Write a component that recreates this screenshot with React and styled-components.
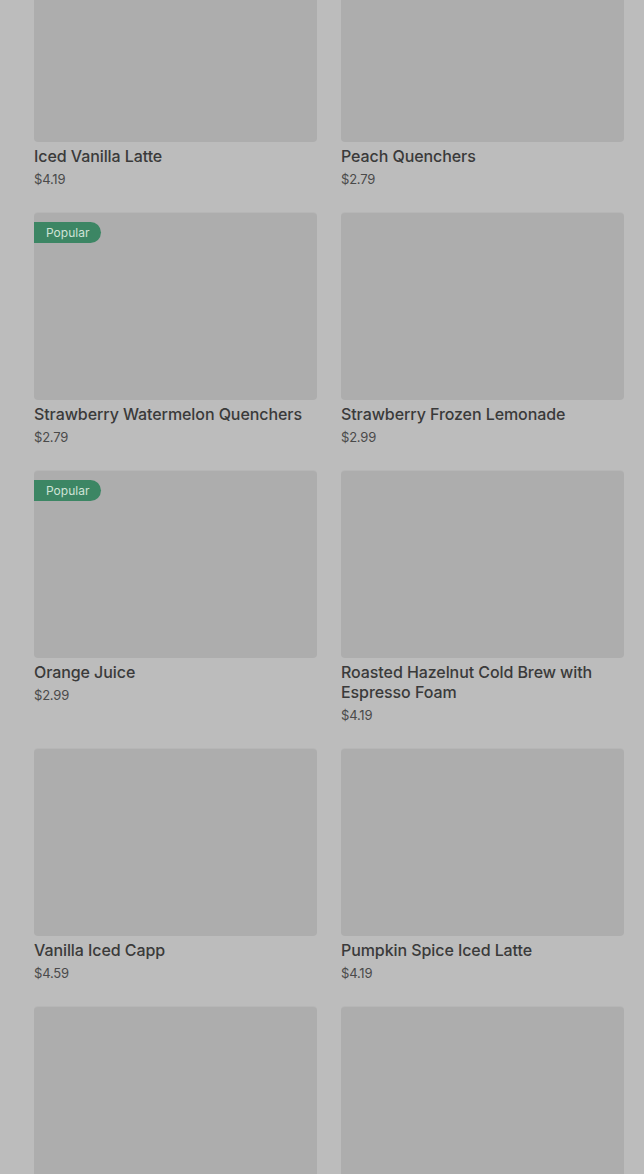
import React from 'react';
import styled, { createGlobalStyle } from 'styled-components';

const GlobalStyle = createGlobalStyle`
  html, body {
    margin: 0;
    padding: 0;
    background: #bcbcbc;
  }

  body {
    font-family: Inter, "Noto Sans", "Liberation Sans", sans-serif;
  }
`;

const items = [
  { name: 'Iced Vanilla Latte', price: '$4.19' },
  { name: 'Peach Quenchers', price: '$2.79' },
  { name: 'Strawberry Watermelon Quenchers', price: '$2.79', popular: true },
  { name: 'Strawberry Frozen Lemonade', price: '$2.99' },
  { name: 'Orange Juice', price: '$2.99', popular: true },
  { name: 'Roasted Hazelnut Cold Brew with Espresso Foam', price: '$4.19' },
  { name: 'Vanilla Iced Capp', price: '$4.59' },
  { name: 'Pumpkin Spice Iced Latte', price: '$4.19' },
  { name: '', price: '' },
  { name: '', price: '' },
];

const ProductCard = ({ name, price, popular }) => (
  <Card>
    <Thumb>{popular && <Badge>Popular</Badge>}</Thumb>
    {name && <Title>{name}</Title>}
    {price && <Price>{price}</Price>}
  </Card>
);

const App = () => (
  <>
    <GlobalStyle />
    <Page>
      <Grid>
        {items.map((item, i) => (
          <ProductCard key={i} {...item} />
        ))}
      </Grid>
    </Page>
  </>
);

const Page = styled.div`
  height: 100vh;
  overflow: hidden;
  padding: 0 20px 0 34px;
`;

const Grid = styled.div`
  display: grid;
  grid-template-columns: 1fr 1fr;
  column-gap: 24px;
  row-gap: 25px;
  margin-top: -45px;
`;

const Card = styled.div`
  display: flex;
  flex-direction: column;
`;

const Thumb = styled.div`
  position: relative;
  height: 187px;
  border-radius: 4px;
  background: #adadad;
  box-shadow: 0 -1px 0 #b6b6b6;
`;

const Badge = styled.span`
  position: absolute;
  top: 9px;
  left: 0;
  height: 21px;
  padding: 0 12px;
  display: flex;
  align-items: center;
  border-radius: 0 11px 11px 0;
  background: #3c8664;
  color: #cfe3d7;
  font-size: 12px;
  line-height: 21px;
`;

const Title = styled.div`
  margin-top: 4px;
  font-size: 16px;
  font-weight: 500;
  line-height: 20px;
  letter-spacing: -0.08px;
  color: #3a3a3a;
`;

const Price = styled.div`
  margin-top: 4px;
  font-size: 13px;
  line-height: 18px;
  letter-spacing: -0.2px;
  color: #4a4a4a;
`;

export default App;
